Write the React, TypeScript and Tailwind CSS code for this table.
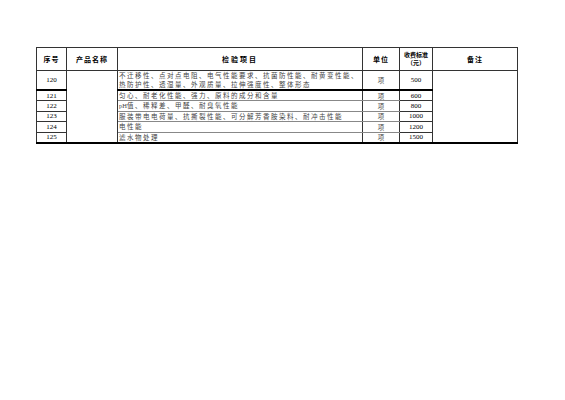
import React from 'react';

interface Row { no: number; item: React.ReactNode; unit: string; price: string; tall?: boolean; }

const rows: Row[] = [
    {
        no: 120,
        item: (
            <>
                不迁移性、点对点电阻、电气性能要求、抗菌防性能、耐黄变性能、<br />
                热防护性、透湿量、外观质量、拉伸强度性、整体形态
            </>
        ),
        unit: '项',
        price: '500',
        tall: true,
    },
    { no: 121, item: '匀心、耐老化性能、强力、原料的成分和含量', unit: '项', price: '600' },
    { no: 122, item: <><span className="font-['Liberation_Serif',serif] tracking-normal">pH</span>值、稀释差、甲醛、耐臭氧性能</>, unit: '项', price: '800' },
    { no: 123, item: '服装带电电荷量、抗撕裂性能、可分解芳香胺染料、耐冲击性能', unit: '项', price: '1000' },
    { no: 124, item: '电性能', unit: '项', price: '1200' },
    { no: 125, item: '滤水物处理', unit: '项', price: '1500' },
];

const cjk = "font-['Noto_Sans_CJK_SC',sans-serif]";
const serif = "font-['Liberation_Serif','Noto_Sans_CJK_SC',serif]";

export default function App() {
    return (
        <div className="w-[565px] h-[400px] bg-white pt-[47px] pl-[36px]">
            <table className="table-fixed border-collapse w-[481px] text-black">
                <colgroup>
                    <col className="w-[30px]" />
                    <col className="w-[51px]" />
                    <col className="w-[245px]" />
                    <col className="w-[37px]" />
                    <col className="w-[33px]" />
                    <col className="w-[85px]" />
                </colgroup>
                <thead>
                    <tr className={`h-[23px] ${cjk} font-bold text-[7px] leading-[8px] text-black`}>
                        <th className="border border-[#333] tracking-[1px]">序号</th>
                        <th className="border border-[#333] tracking-[1px]">产品名称</th>
                        <th className="border border-[#333] tracking-[2px]">检验项目</th>
                        <th className="border border-[#333] tracking-[1px]">单位</th>
                        <th className="border border-[#333] p-0 text-[6px] leading-[8px]">
                            <div className="whitespace-nowrap">收费标准</div>
                            <div className="whitespace-nowrap">（元）</div>
                        </th>
                        <th className="border border-[#333] tracking-[1px]">备注</th>
                    </tr>
                </thead>
                <tbody>
                    {rows.map((r, i) => {
                        const bottom = r.tall || i === rows.length - 1 ? 'border-b-2 border-b-black' : '';
                        return (
                            <tr key={r.no} className={r.tall ? 'h-[19px]' : 'h-[10.5px]'}>
                                <td className={`border border-[#333] ${bottom} text-center ${serif} text-[7px] leading-[8px] text-black p-0`}>{r.no}</td>
                                {i === 0 && <td rowSpan={rows.length} className="border border-[#333] border-b-2 border-b-black" />}
                                <td className={`border border-[#888] border-x-[#333] ${bottom} ${cjk} text-[6.5px] leading-[9px] tracking-[1.5px] text-[#444] px-[1px] py-0 whitespace-nowrap overflow-hidden`}>
                                    {r.item}
                                </td>
                                <td className={`border border-[#888] border-x-[#333] ${bottom} text-center ${cjk} text-[6.5px] leading-[8px] text-[#444] p-0`}>{r.unit}</td>
                                <td className={`border border-[#333] ${bottom} text-center ${serif} text-[7px] leading-[8px] text-black p-0`}>{r.price}</td>
                                {i === 0 && <td rowSpan={rows.length} className="border border-[#333] border-b-2 border-b-black" />}
                            </tr>
                        );
                    })}
                </tbody>
            </table>
        </div>
    );
}
